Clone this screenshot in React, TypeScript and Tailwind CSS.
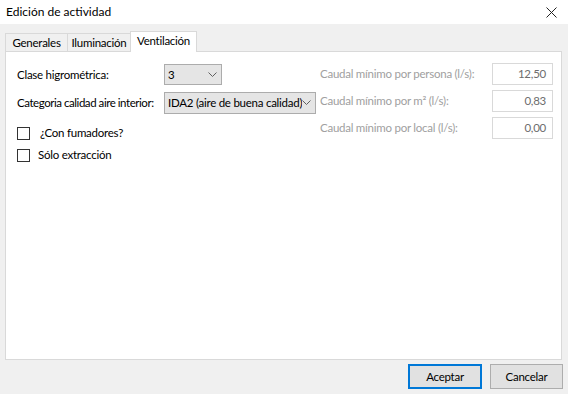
import React from "react";

const font = { fontFamily: "Lato, 'Noto Sans', sans-serif" };

function Chevron() {
  return (
    <svg width="9" height="6" viewBox="0 0 9 6" className="shrink-0">
      <path d="M0.5 0.5 L4.5 4.5 L8.5 0.5" fill="none" stroke="#606060" strokeWidth="1" />
    </svg>
  );
}

function Combo({ text, w, h }: { text: string; w: string; h: string }) {
  return (
    <div className={`flex items-center shrink-0 ${w} ${h} bg-[#e5e5e5] border border-[#acacac] pl-[3px] pr-[4px] overflow-hidden`}>
      <span className="flex-1 whitespace-nowrap overflow-hidden text-[11.5px] text-black">{text}</span>
      <Chevron />
    </div>
  );
}

function Check({ label, pl }: { label: string; pl: string }) {
  return (
    <div className="flex items-center h-[14px]">
      <div className="w-[13px] h-[13px] border border-[#333333] bg-white shrink-0" />
      <span className={`${pl} text-[11.5px] text-black`}>{label}</span>
    </div>
  );
}

function Field({ label, value }: { label: string; value: string }) {
  return (
    <div className="flex items-center h-[22px]">
      <span className="w-[172px] shrink-0 text-[11.5px] text-[#a0a0a0] whitespace-nowrap">{label}</span>
      <div className="w-[61px] h-[22px] shrink-0 border border-[#d9d9d9] bg-white flex items-center justify-end pr-[6px] text-[11.5px] text-[#6d6d6d]">
        {value}
      </div>
    </div>
  );
}

export default function App() {
  return (
    <div className="w-[568px] h-[394px] bg-[#f0f0f0] flex flex-col overflow-hidden tracking-[-0.25px]" style={font}>
      <div className="h-[24px] bg-white flex items-center justify-between pl-[6px] pr-[11px] shrink-0">
        <span className="text-[12px] text-black tracking-normal">Edición de actividad</span>
        <svg width="11" height="11" viewBox="0 0 11 11">
          <path d="M0.5 0.5 L10.5 10.5 M10.5 0.5 L0.5 10.5" stroke="#222" strokeWidth="1" />
        </svg>
      </div>
      <div className="flex items-end h-[21px] mt-[6px] pl-[5px] shrink-0">
        <div className="w-[62px] h-[18px] flex items-center justify-center border-t border-l border-[#d9d9d9] bg-[#f0f0f0] text-[11.5px] text-black">Generales</div>
        <div className="w-[64px] h-[18px] flex items-center justify-center border-t border-l border-r border-[#d9d9d9] bg-[#f0f0f0] text-[11.5px] text-black">Iluminación</div>
        <div className="w-[67px] h-[21px] pb-[3px] flex items-center justify-center border-t border-l border-r border-[#d9d9d9] bg-white text-[11.5px] text-black relative z-10 -mb-px -ml-px">Ventilación</div>
      </div>
      <div className="ml-[5px] mr-[6px] h-[309px] border border-[#d9d9d9] bg-white flex shrink-0">
        <div className="flex flex-col pl-[11px] pt-[12px] w-[314px] shrink-0">
          <div className="flex items-center">
            <span className="w-[147px] shrink-0 text-[11.5px] text-black whitespace-nowrap">Clase higrométrica:</span>
            <Combo text="3" w="w-[58px]" h="h-[21px]" />
          </div>
          <div className="flex items-center mt-[7px]">
            <span className="w-[147px] shrink-0 text-[11.5px] text-black whitespace-nowrap tracking-[-0.45px]">Categoria calidad aire interior:</span>
            <Combo text="IDA2 (aire de buena calidad)" w="w-[152px]" h="h-[22px]" />
          </div>
          <div className="mt-[12px] flex flex-col gap-[8px]">
            <Check label="¿Con fumadores?" pl="pl-[10px]" />
            <Check label="Sólo extracción" pl="pl-[8px]" />
          </div>
        </div>
        <div className="flex flex-col pt-[11px] gap-[5px]">
          <Field label="Caudal mínimo por persona (l/s):" value="12,50" />
          <Field label="Caudal mínimo por m² (l/s):" value="0,83" />
          <Field label="Caudal mínimo por local (l/s):" value="0,00" />
        </div>
      </div>
      <div className="flex justify-end gap-[8px] pr-[5px] mt-[4px]">
        <div className="w-[74px] h-[25px] border-2 border-[#0078d7] bg-[#e1e1e1] flex items-center justify-center text-[11.5px] text-black">Aceptar</div>
        <div className="w-[73px] h-[25px] border border-[#adadad] bg-[#e1e1e1] flex items-center justify-center text-[11.5px] text-black">Cancelar</div>
      </div>
    </div>
  );
}
